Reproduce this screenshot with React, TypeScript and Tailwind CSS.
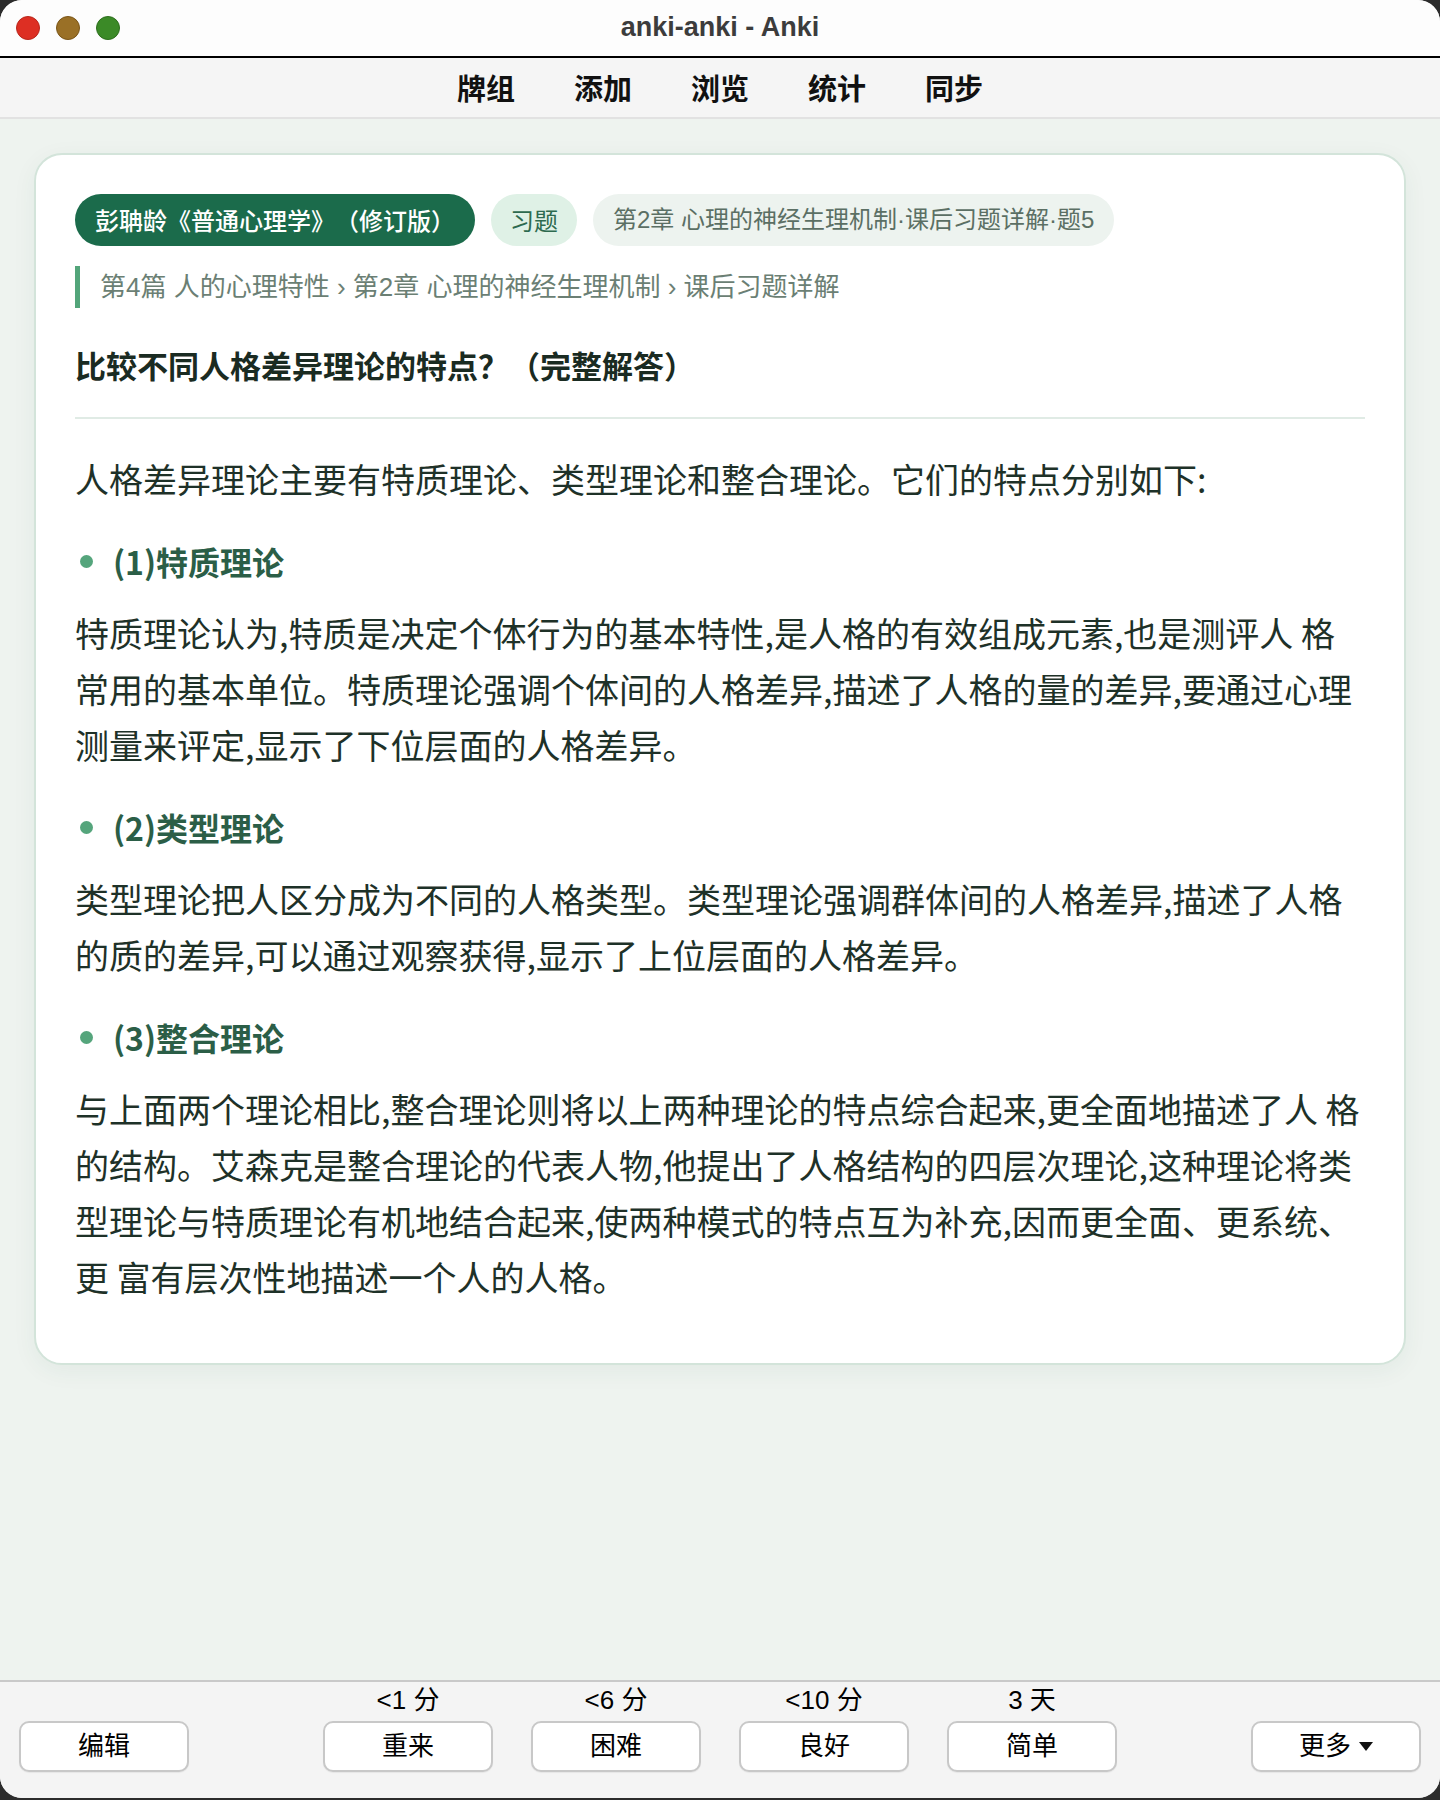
import React from "react";

interface Section {
  title: string;
  lines: string[];
}

const sections: Section[] = [
  {
    title: "(1)特质理论",
    lines: [
      "特质理论认为,特质是决定个体行为的基本特性,是人格的有效组成元素,也是测评人 格",
      "常用的基本单位。特质理论强调个体间的人格差异,描述了人格的量的差异,要通过心理",
      "测量来评定,显示了下位层面的人格差异。",
    ],
  },
  {
    title: "(2)类型理论",
    lines: [
      "类型理论把人区分成为不同的人格类型。类型理论强调群体间的人格差异,描述了人格",
      "的质的差异,可以通过观察获得,显示了上位层面的人格差异。",
    ],
  },
  {
    title: "(3)整合理论",
    lines: [
      "与上面两个理论相比,整合理论则将以上两种理论的特点综合起来,更全面地描述了人 格",
      "的结构。艾森克是整合理论的代表人物,他提出了人格结构的四层次理论,这种理论将类",
      "型理论与特质理论有机地结合起来,使两种模式的特点互为补充,因而更全面、更系统、",
      "更 富有层次性地描述一个人的人格。",
    ],
  },
];

const navItems = ["牌组", "添加", "浏览", "统计", "同步"];

const answers = [
  { label: "重来", time: "<1 分" },
  { label: "困难", time: "<6 分" },
  { label: "良好", time: "<10 分" },
  { label: "简单", time: "3 天" },
];

function BarButton({ children }: { children: React.ReactNode }) {
  return (
    <button className="w-[170px] h-[51px] rounded-[10px] border-2 border-[#c8c8c8] bg-white text-[26px] text-black flex items-center justify-center gap-[10px] shadow-[0_1px_1px_rgba(0,0,0,0.06)]">
      {children}
    </button>
  );
}

export default function App() {
  return (
    <div className="h-[1800px] bg-[#2c2c2c] [text-spacing-trim:space-all] font-['Liberation_Sans','Noto_Sans_CJK_SC',sans-serif]">
      <div className="h-[1798px] rounded-[22px] overflow-hidden flex flex-col bg-[#f4f4f4]">
        {/* Title bar */}
        <div className="relative h-[58px] shrink-0 bg-[#fdfdfd] border-b-2 border-black flex items-center justify-center">
          <div className="absolute left-[16px] top-[16px] flex gap-[16px]">
            <span className="w-[24px] h-[24px] rounded-full bg-[#dd2f23] border border-[#b8271c]" />
            <span className="w-[24px] h-[24px] rounded-full bg-[#9a7026] border border-[#7a5518]" />
            <span className="w-[24px] h-[24px] rounded-full bg-[#3b8a27] border border-[#2d6e1d]" />
          </div>
          <span className="-mt-[2px] text-[27px] font-bold text-[#3c3c3c]">anki-anki - Anki</span>
        </div>

        {/* Nav */}
        <div className="h-[61px] shrink-0 bg-[#f5f5f5] border-b-2 border-[#e2e2e2] flex items-center justify-center gap-[59px]">
          {navItems.map((n) => (
            <span
              key={n}
              className="text-[29px] font-bold text-[#111] font-['Noto_Sans_CJK_SC',sans-serif]"
            >
              {n}
            </span>
          ))}
        </div>

        {/* Main */}
        <div className="flex-1 bg-[#eef3ef] px-[34px] pt-[34px] font-['Noto_Sans_CJK_SC',sans-serif]">
          <div className="rounded-[28px] border-2 border-[#d3e4da] bg-white px-[39px] pt-[39px] pb-[58px] shadow-[0_6px_24px_rgba(40,80,60,0.06)]">
            {/* Tags */}
            <div className="flex gap-[16px]">
              <span className="h-[52px] leading-[52px] px-[20px] rounded-full bg-[#1b6b4b] text-white text-[24px] font-medium">
                彭聃龄《普通心理学》（修订版）
              </span>
              <span className="h-[52px] leading-[52px] px-[19px] rounded-full bg-[#dff1e6] text-[#2d6a4f] text-[24px]">
                习题
              </span>
              <span className="h-[52px] leading-[52px] px-[20px] rounded-full bg-[#edf3ef] text-[#5b6f64] text-[24px] font-['Liberation_Sans','Noto_Sans_CJK_SC',sans-serif]">
                第2章 心理的神经生理机制·课后习题详解·题5
              </span>
            </div>

            {/* Breadcrumb */}
            <div className="mt-[20px] h-[42px] leading-[42px] border-l-[5px] border-[#53a57a] pl-[20px] text-[26px] text-[#6b7f74] font-['Liberation_Sans','Noto_Sans_CJK_SC',sans-serif]">
              第4篇 人的心理特性 › 第2章 心理的神经生理机制 › 课后习题详解
            </div>

            {/* Question */}
            <div className="mt-[36px] pb-[31px] border-b-2 border-[#e0ebe5]">
              <h1 className="text-[31px] leading-[42px] font-bold text-[#1a2b22]">
                比较不同人格差异理论的特点？（完整解答）
              </h1>
            </div>

            {/* Answer */}
            <div className="text-[34px] leading-[56px] text-[#1e3128]">
              <p className="mt-[32px] whitespace-nowrap">
                人格差异理论主要有特质理论、类型理论和整合理论。它们的特点分别如下:
              </p>
              {sections.map((s) => (
                <div key={s.title}>
                  <div className="mt-[32px] mb-[22px] flex items-center gap-[20px] pl-[5px] h-[44px]">
                    <span className="w-[13px] h-[13px] rounded-full bg-[#55a57c]" />
                    <span className="text-[32px] leading-[44px] font-bold text-[#2b5e47]">
                      {s.title}
                    </span>
                  </div>
                  <p className="whitespace-nowrap">
                    {s.lines.map((l, i) => (
                      <React.Fragment key={i}>
                        {i > 0 && <br />}
                        {l}
                      </React.Fragment>
                    ))}
                  </p>
                </div>
              ))}
            </div>
          </div>
        </div>

        {/* Answer bar */}
        <div className="shrink-0 bg-[#f4f4f4] border-t-2 border-[#c9c9c9] pt-[3px] pb-[26px] px-[19px] flex items-end justify-between">
          <BarButton>编辑</BarButton>
          <div className="flex gap-[38px]">
            {answers.map((a) => (
              <div key={a.label} className="flex flex-col items-center gap-[6px]">
                <span className="text-[26px] leading-[30px] text-black">{a.time}</span>
                <BarButton>{a.label}</BarButton>
              </div>
            ))}
          </div>
          <BarButton>
            <span>更多</span>
            <svg width="14" height="9" viewBox="0 0 14 9" className="-ml-[2px]">
              <polygon points="0,0 14,0 7,9" fill="#111" />
            </svg>
          </BarButton>
        </div>
      </div>
    </div>
  );
}
